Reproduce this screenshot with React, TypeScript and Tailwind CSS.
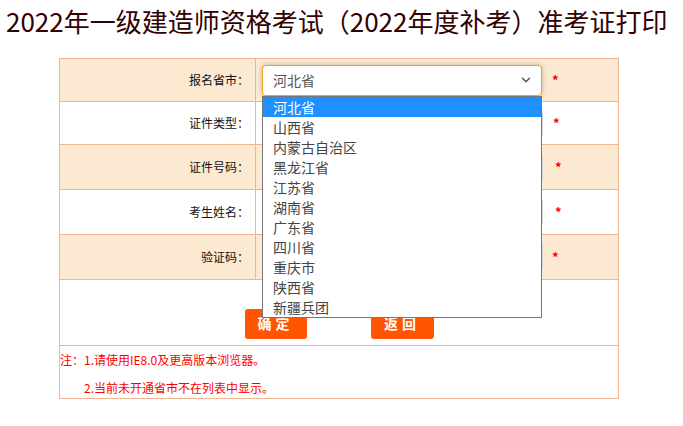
import { ChevronDown } from 'lucide-react';

const PROVINCES = [
  '河北省',
  '山西省',
  '内蒙古自治区',
  '黑龙江省',
  '江苏省',
  '湖南省',
  '广东省',
  '四川省',
  '重庆市',
  '陕西省',
  '新疆兵团',
];

const CJK = "font-['Noto_Sans_CJK_SC','Noto_Sans',sans-serif]";

function Star() {
  return <span className="text-[13px] font-bold text-[#ff0000]">*</span>;
}

function Label({ text }: { text: string }) {
  return (
    <td className="w-[196px] border border-[#efb590] pr-[6px] text-right text-[12px] text-[#111]">
      {text}
    </td>
  );
}

function TextInput() {
  return (
    <div className="h-[30px] w-[281px] rounded-[4px] border border-[#d6d6d6] bg-white" />
  );
}

export default function App() {
  return (
    <div className={`min-h-[426px] w-[683px] bg-white ${CJK}`}>
      {/* Page title */}
      <h1 className="pl-[6px] text-[26px] leading-[42px] font-normal whitespace-nowrap text-[#330000]">
        2022年一级建造师资格考试（2022年度补考）准考证打印
      </h1>

      <table className="mt-[16px] ml-[59px] w-[560px] border-collapse">
        <tbody>
          <tr className="h-[43px] bg-[#fce9d1]">
            <Label text="报名省市：" />
            <td className="relative border border-[#efb590] pl-[6px]">
              <div className="flex items-center gap-[10px]">
                <div className="flex h-[31px] w-[280px] items-center justify-between rounded-[4px] border border-[#f7a21b] bg-white pr-[8px] pl-[10px] text-[14px] text-[#555] shadow-[0_0_5px_rgba(0,0,0,0.25)]">
                  <span>河北省</span>
                  <ChevronDown size={14} strokeWidth={2.5} className="text-[#555]" />
                </div>
                <Star />
              </div>

              {/* Open option list */}
              <ul className="absolute top-[37px] left-[6px] z-10 w-[280px] border border-[#767676] bg-white text-[14px] text-[#444]">
                {PROVINCES.map((p, i) => (
                  <li
                    key={p}
                    className={
                      i === 0
                        ? 'h-[20px] bg-[#1e90ff] pl-[10px] leading-[20px] text-white'
                        : 'h-[20px] pl-[10px] leading-[20px]'
                    }
                  >
                    {p}
                  </li>
                ))}
              </ul>
            </td>
          </tr>

          <tr className="h-[43px] bg-white">
            <Label text="证件类型：" />
            <td className="border border-[#efb590] pl-[6px]">
              <div className="flex items-center gap-[10px]">
                <TextInput />
                <Star />
              </div>
            </td>
          </tr>

          <tr className="h-[45px] bg-[#fce9d1]">
            <Label text="证件号码：" />
            <td className="border border-[#efb590] pl-[6px]">
              <div className="flex items-center gap-[12px]">
                <TextInput />
                <Star />
              </div>
            </td>
          </tr>

          <tr className="h-[45px] bg-white">
            <Label text="考生姓名：" />
            <td className="border border-[#efb590] pl-[6px]">
              <div className="flex items-center gap-[12px]">
                <TextInput />
                <Star />
              </div>
            </td>
          </tr>

          <tr className="h-[45px] bg-[#fce9d1]">
            <Label text="验证码：" />
            <td className="border border-[#efb590] pl-[6px]">
              <div className="flex items-center gap-[9px]">
                <TextInput />
                <Star />
              </div>
            </td>
          </tr>

          <tr className="h-[66px] bg-white">
            <td colSpan={2} className="border border-[#efb590] pt-[22px]">
              <div className="flex justify-center gap-[64px]">
                <button className="h-[30px] w-[62px] rounded-[3px] bg-[#ff5500] text-[14px] font-semibold tracking-[4px] text-white">
                  确定
                </button>
                <button className="h-[30px] w-[63px] rounded-[3px] bg-[#ff5500] text-[14px] font-semibold tracking-[4px] text-white">
                  返回
                </button>
              </div>
            </td>
          </tr>

          <tr className="h-[53px] bg-white">
            <td colSpan={2} className="border border-[#efb590] align-top text-[12px] text-[#ff0000]">
              <p className="mt-[6px] leading-[16px]">注：1.请使用IE8.0及更高版本浏览器。</p>
              <p className="mt-[12px] pl-[24px] leading-[16px]">2.当前未开通省市不在列表中显示。</p>
            </td>
          </tr>
        </tbody>
      </table>
    </div>
  );
}
